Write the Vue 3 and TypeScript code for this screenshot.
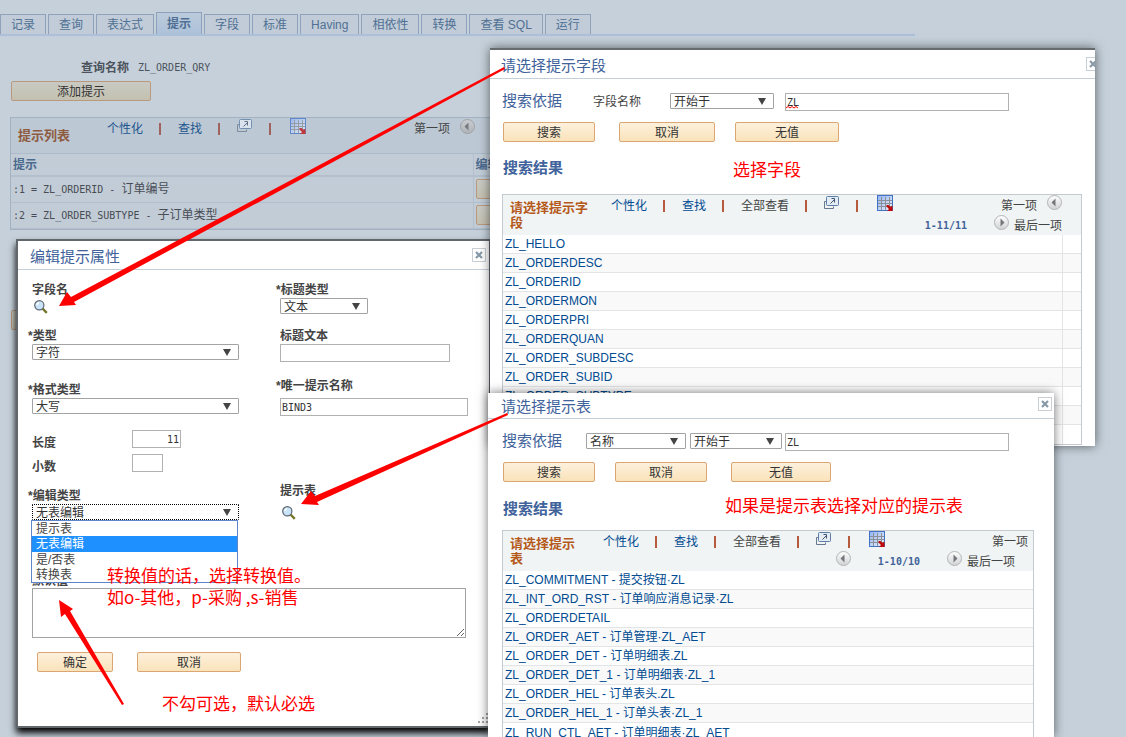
<script setup lang="ts">
import { ref } from 'vue'

interface ResultRow {
  code: string
  label?: string
}

const tabs: string[] = ['记录', '查询', '表达式', '提示', '字段', '标准', 'Having', '相依性', '转换', '查看 SQL', '运行']
const activeTab = ref('提示')

const prompts = [
  { code: ':1 = ZL_ORDERID - ', name: '订单编号' },
  { code: ':2 = ZL_ORDER_SUBTYPE - ', name: '子订单类型' },
]

const fields: ResultRow[] = [
  { code: 'ZL_HELLO' },
  { code: 'ZL_ORDERDESC' },
  { code: 'ZL_ORDERID' },
  { code: 'ZL_ORDERMON' },
  { code: 'ZL_ORDERPRI' },
  { code: 'ZL_ORDERQUAN' },
  { code: 'ZL_ORDER_SUBDESC' },
  { code: 'ZL_ORDER_SUBID' },
  { code: 'ZL_ORDER_SUBTYPE' },
  { code: '' },
  { code: '' },
]

const records: ResultRow[] = [
  { code: 'ZL_COMMITMENT', label: '提交按钮·ZL' },
  { code: 'ZL_INT_ORD_RST', label: '订单响应消息记录·ZL' },
  { code: 'ZL_ORDERDETAIL' },
  { code: 'ZL_ORDER_AET', label: '订单管理·ZL_AET' },
  { code: 'ZL_ORDER_DET', label: '订单明细表.ZL' },
  { code: 'ZL_ORDER_DET_1', label: '订单明细表·ZL_1' },
  { code: 'ZL_ORDER_HEL', label: '订单表头.ZL' },
  { code: 'ZL_ORDER_HEL_1', label: '订单头表·ZL_1' },
  { code: 'ZL_RUN_CTL_AET', label: '订单明细表·ZL_AET' },
]

const editTypes: string[] = ['提示表', '无表编辑', '是/否表', '转换表']
const editType = ref('无表编辑')
const fieldQuery = ref('ZL')
const recordQuery = ref('ZL')
const uniqueName = ref('BIND3')
const length = ref('11')
const decimals = ref('')
const titleText = ref('')
const defaultValue = ref('')
</script>

<template>
  <main class="desktop">
    <svg class="defs" aria-hidden="true">
      <defs>
        <linearGradient id="disc" x1="0" y1="0" x2="0" y2="1">
          <stop offset="0" stop-color="#ffffff" />
          <stop offset="1" stop-color="#cfd2d4" />
        </linearGradient>
        <linearGradient id="sheet" x1="0" y1="0" x2="1" y2="1">
          <stop offset="0" stop-color="#8fb3f5" />
          <stop offset="1" stop-color="#eef3fb" />
        </linearGradient>
        <symbol id="popout" viewBox="0 0 16 14">
          <path d="M3 5.500H.500V12.500H9.500V10.500" fill="none" stroke="#68788c" />
          <rect x="2.500" y=".500" width="12" height="9" rx="1" fill="#e4edf6" stroke="#5b7da6" />
          <path d="M6.500 7.500L10.500 3.500M7.500 2.500H10.500V6.500" fill="none" stroke="#3f526b" />
        </symbol>
        <symbol id="sheet-icon" viewBox="0 0 16 16">
          <rect x=".500" y=".500" width="15" height="15" fill="url(#sheet)" stroke="#4272c4" />
          <path d="M4.500 2V15M8.500 2V15M12.500 2V15M1 5.500H15M1 8.500H15M1 11.500H15" stroke="#8b8f96" fill="none" />
          <path d="M9.500 10L11.500 10L13.500 12L15.500 10.500V16H10L12 14L9.500 11.500Z" fill="#c00a0a" />
        </symbol>
        <symbol id="prev" viewBox="0 0 15 15">
          <circle cx="7.500" cy="7.500" r="7" fill="url(#disc)" stroke="#b3b5b7" />
          <path d="M8.500 3.500V11.500L4.500 7.500Z" fill="#74777a" />
        </symbol>
        <symbol id="next" viewBox="0 0 15 15">
          <circle cx="7.500" cy="7.500" r="7" fill="url(#disc)" stroke="#b3b5b7" />
          <path d="M6.500 3.500V11.500L10.500 7.500Z" fill="#74777a" />
        </symbol>
        <symbol id="lens" viewBox="0 0 14 14">
          <path d="M8.500 8.500L12.800 12.800" stroke="#75762a" stroke-width="2.400" />
          <circle cx="5.300" cy="5.300" r="4.600" fill="#c9e4fa" stroke="#5d6672" stroke-width="1.200" />
          <path d="M2.700 5A3 3 0 0 1 5 2.700" stroke="#fff" stroke-width="1.500" fill="none" />
        </symbol>
        <symbol id="cross" viewBox="0 0 8 8">
          <path d="M1 1L7 7M7 1L1 7" stroke="#8799a6" stroke-width="2.200" />
        </symbol>
      </defs>
    </svg>

    <section class="page">
      <nav class="tabs">
        <a v-for="t in tabs" :key="t" href="#" class="tab" :class="{ active: t === activeTab }" @click.prevent="activeTab = t">{{ t }}</a>
      </nav>
      <p class="query"><b>查询名称</b><span class="mono">ZL_ORDER_QRY</span></p>
      <button type="button" class="btn dim add">添加提示</button>

      <div class="base-grid">
        <div class="grid-head base-head">
          <h2 class="grid-title">提示列表</h2>
          <div class="tools">
            <a href="#">个性化</a><i class="bar"></i><a href="#">查找</a><i class="bar"></i>
            <svg class="popout"><use href="#popout" /></svg><i class="bar"></i>
            <svg class="sheet"><use href="#sheet-icon" /></svg>
          </div>
          <div class="base-pager"><span>第一项</span><svg class="disc"><use href="#prev" /></svg></div>
        </div>
        <table class="prompt-table">
          <thead>
            <tr><th class="wide">提示</th><th>编辑</th></tr>
          </thead>
          <tbody>
            <tr v-for="p in prompts" :key="p.code">
              <td><span class="mono">{{ p.code }}</span>{{ p.name }}</td>
              <td><button type="button" class="btn dim row-btn"></button></td>
            </tr>
          </tbody>
        </table>
      </div>
      <button type="button" class="btn dim under"></button>
    </section>

    <section class="dialog edit-dialog">
      <header class="dialog-head">
        <h1>编辑提示属性</h1>
        <button type="button" class="close"><svg><use href="#cross" /></svg></button>
      </header>
      <div class="edit-body">
        <div class="columns">
          <div class="col">
            <div class="field">
              <span class="lab">字段名</span>
              <button type="button" class="lookup"><svg><use href="#lens" /></svg></button>
            </div>
            <div class="field second">
              <label class="lab req" for="type">*类型</label>
              <span class="pick full"><select id="type"><option>字符</option></select></span>
            </div>
            <div class="field third">
              <label class="lab req" for="format">*格式类型</label>
              <span class="pick full"><select id="format"><option>大写</option></select></span>
            </div>
            <div class="sizes">
              <label for="len">长度</label><input id="len" v-model="length" class="mono num" />
              <label for="dec">小数</label><input id="dec" v-model="decimals" class="mono num short" />
            </div>
            <div class="field edit-type">
              <label class="lab req" for="edit">*编辑类型</label>
              <span class="pick full open">
                <select id="edit" v-model="editType"><option v-for="o in editTypes" :key="o">{{ o }}</option></select>
              </span>
              <ul class="menu" role="listbox">
                <li v-for="o in editTypes" :key="o" role="option" :aria-selected="o === editType" :class="{ on: o === editType }" @click="editType = o">{{ o }}</li>
              </ul>
            </div>
          </div>
          <div class="col">
            <div class="field">
              <label class="lab req" for="ttype">*标题类型</label>
              <span class="pick small"><select id="ttype"><option>文本</option></select></span>
            </div>
            <div class="field title-text">
              <label class="lab" for="ttext">标题文本</label>
              <input id="ttext" v-model="titleText" class="mono medium" />
            </div>
            <div class="field unique">
              <label class="lab req" for="uniq">*唯一提示名称</label>
              <input id="uniq" v-model="uniqueName" class="mono" />
            </div>
            <div class="field prompt-record">
              <span class="lab">提示表</span>
              <button type="button" class="lookup"><svg><use href="#lens" /></svg></button>
            </div>
          </div>
        </div>
        <label class="default-label" for="def">默认值</label>
        <textarea id="def" v-model="defaultValue"></textarea>
        <div class="edit-actions">
          <button type="button" class="btn ok">确定</button>
          <button type="button" class="btn b104">取消</button>
        </div>
      </div>
      <svg class="grip" viewBox="0 0 10 10" aria-hidden="true">
        <path d="M8 0h2v2h-2zM4 4h2v2h-2zM8 4h2v2h-2zM0 8h2v2h-2zM4 8h2v2h-2zM8 8h2v2h-2z" fill="#a5a5a5" />
      </svg>
    </section>

    <section class="dialog field-dialog">
      <header class="dialog-head">
        <h1>请选择提示字段</h1>
        <button type="button" class="close"><svg><use href="#cross" /></svg></button>
      </header>
      <div class="search-body">
        <div class="search-row">
          <span class="by">搜索依据</span>
          <label class="by-name" for="q1">字段名称</label>
          <span class="pick op1"><select aria-label="字段名称"><option>开始于</option></select></span>
          <span class="typed"><input id="q1" v-model="fieldQuery" class="mono" spellcheck="false" /><svg class="squiggle" viewBox="0 0 14 3"><path d="M0 2L2 .500L4 2L6 .500L8 2L10 .500L12 2" fill="none" stroke="#f00" /></svg></span>
        </div>
        <div class="actions first">
          <button type="button" class="btn b92">搜索</button>
          <button type="button" class="btn b96">取消</button>
          <button type="button" class="btn b104">无值</button>
        </div>
        <h2 class="results">搜索结果</h2>
        <div class="result-grid">
          <div class="grid-head">
            <h2 class="grid-title t84">请选择提示字段</h2>
            <div class="tools">
              <a href="#">个性化</a><i class="bar"></i><a href="#">查找</a><i class="bar"></i><span>全部查看</span><i class="bar"></i>
              <svg class="popout"><use href="#popout" /></svg><i class="bar"></i>
              <svg class="sheet"><use href="#sheet-icon" /></svg>
            </div>
            <div class="pager p1">
              <div><span>第一项</span><svg class="disc"><use href="#prev" /></svg></div>
              <div><b>1-11/11</b><svg class="disc"><use href="#next" /></svg><span>最后一项</span></div>
            </div>
          </div>
          <table class="results-table">
            <tbody>
              <tr v-for="(r, i) in fields" :key="i">
                <td><a href="#">{{ r.code }}</a></td>
                <td class="edge"></td>
              </tr>
            </tbody>
          </table>
        </div>
      </div>
    </section>

    <section class="dialog record-dialog">
      <header class="dialog-head">
        <h1>请选择提示表</h1>
        <button type="button" class="close"><svg><use href="#cross" /></svg></button>
      </header>
      <div class="search-body">
        <div class="search-row">
          <span class="by">搜索依据</span>
          <span class="pick key"><select aria-label="搜索依据"><option>名称</option></select></span>
          <span class="pick op2"><select aria-label="条件"><option>开始于</option></select></span>
          <span class="typed near"><input v-model="recordQuery" class="mono" aria-label="值" spellcheck="false" /></span>
        </div>
        <div class="actions">
          <button type="button" class="btn b92">搜索</button>
          <button type="button" class="btn b92">取消</button>
          <button type="button" class="btn b100">无值</button>
        </div>
        <h2 class="results">搜索结果</h2>
        <div class="result-grid">
          <div class="grid-head">
            <h2 class="grid-title t76">请选择提示表</h2>
            <div class="tools">
              <a href="#">个性化</a><i class="bar"></i><a href="#">查找</a><i class="bar"></i><span>全部查看</span><i class="bar"></i>
              <svg class="popout"><use href="#popout" /></svg><i class="bar"></i>
              <svg class="sheet"><use href="#sheet-icon" /></svg>
            </div>
            <div class="pager p2">
              <div><span>第一项</span></div>
              <div><svg class="disc"><use href="#prev" /></svg><b>1-10/10</b><svg class="disc"><use href="#next" /></svg><span>最后一项</span></div>
            </div>
          </div>
          <table class="results-table">
            <tbody>
              <tr v-for="r in records" :key="r.code">
                <td><a href="#">{{ r.code }}<template v-if="r.label"> - {{ r.label }}</template></a></td>
              </tr>
            </tbody>
          </table>
        </div>
      </div>
    </section>

    <svg class="arrows" width="1126" height="737" viewBox="0 0 1126 737" aria-hidden="true">
      <g fill="#f00">
        <path d="M59 306L67 292L71 297L504 67L505 69L74 302L76 305Z" />
        <path d="M301 504L311 491L315 496L507 413L508 415L317 502L319 505Z" />
        <path d="M59 600L73 609L70 611L124 704L122 705L65 614L61 617Z" />
      </g>
    </svg>
    <p class="note n1">选择字段</p>
    <p class="note n2">如果是提示表选择对应的提示表</p>
    <p class="note n3">转换值的话，选择转换值。<br />如o-其他，p-采购 ,s-销售</p>
    <p class="note n4">不勾可选，默认必选</p>
  </main>
</template>

<style>
body {
  background: #c5d0da;
}
</style>

<style scoped>
* {
  box-sizing: border-box;
}
.desktop {
  position: relative;
  height: 100vh;
  overflow: hidden;
  background: #c5d0da;
  color: #444;
  font: 12px/16px 'Liberation Sans', 'Noto Sans CJK SC', sans-serif;
}
.defs {
  position: absolute;
  width: 0;
  height: 0;
}
h1, h2, p, ul {
  margin: 0;
  padding: 0;
}
svg {
  display: block;
  flex: none;
}
a {
  color: #004b91;
  text-decoration: none;
}
button, input, select, textarea {
  font: inherit;
  color: #333;
  margin: 0;
  border-radius: 0;
}
.mono, input.mono {
  font-family: 'DejaVu Sans Mono', 'Noto Sans CJK SC', monospace;
  font-size: 10px;
  white-space: pre;
}
.btn {
  height: 20px;
  padding: 2px 0 0;
  border: 1px solid #dba671;
  border-radius: 2px;
  background: linear-gradient(#fdf0dc, #fae3ba);
  line-height: 16px;
  text-align: center;
}
.btn.dim {
  border-color: #b99a7e;
  background: linear-gradient(#c9cac4, #c4c1b0);
}
.b92 { width: 92px; }
.b96 { width: 96px; }
.b100 { width: 100px; }
.b104 { width: 104px; }

/* Page behind the dialogs */
.page {
  width: 915px;
  padding-top: 12px;
}
.tabs {
  display: flex;
  align-items: flex-end;
  gap: 2px;
  height: 24px;
  border-bottom: 2px solid #acc1d9;
}
.tab {
  height: 20px;
  padding: 0 10px;
  border: 1px solid #8ea2bc;
  border-bottom: 0;
  background: #c1ccd8;
  color: #4f7094;
  line-height: 20px;
}
.tab.active {
  height: 22px;
  background: linear-gradient(#bccbdc, #acc1d9);
  font-weight: bold;
  line-height: 23px;
}
.query {
  display: flex;
  gap: 9px;
  margin: 24px 0 0 81px;
  color: #4c535c;
  line-height: 16px;
}
.add {
  display: block;
  width: 140px;
  margin: 5px 0 0 11px;
}
.base-grid {
  margin: 16px 0 0 10px;
  border: 1px solid #a3b2c2;
  background: #c2ccd6;
}
.grid-head {
  display: flex;
  height: 40px;
  background: #f0f4f5;
  white-space: nowrap;
}
.base-head {
  height: 36px;
  background: #bcc8d4;
  border-bottom: 1px solid #adbac9;
}
.grid-title {
  flex: none;
  margin: 5px 17px 0 7px;
  color: #b5591b;
  font-size: 13px;
  line-height: 15px;
  white-space: normal;
}
.t84 { width: 84px; }
.t76 { width: 76px; }
.base-head .grid-title {
  width: 72px;
  margin-top: 10px;
  color: #8f5b40;
}
.base-head a {
  color: #1c568f;
}
.tools {
  display: flex;
  flex: none;
  height: 22px;
  align-items: center;
}
.bar {
  width: 2px;
  height: 12px;
  margin: 0 17px 0 16px;
  background: #b55a3c;
}
.base-head .bar {
  background: #a0625c;
}
.popout {
  width: 16px;
  height: 14px;
  margin-bottom: 6px;
}
.sheet {
  width: 16px;
  height: 16px;
  margin: 0 0 6px 2px;
}
.base-head svg {
  opacity: 0.75;
}
.disc {
  width: 15px;
  height: 15px;
}
.base-head .disc {
  filter: brightness(0.82);
}
.base-pager {
  display: flex;
  align-items: center;
  gap: 10px;
  height: 22px;
  margin-left: 108px;
}
.base-pager svg {
  margin-bottom: 6px;
}
.prompt-table {
  width: 100%;
  border-collapse: collapse;
  color: #484d55;
}
.prompt-table th, .prompt-table td {
  height: 26px;
  padding: 0 2px;
  border-bottom: 1px solid #b3bfcc;
  border-left: 1px solid #b3bfcc;
  text-align: left;
}
.prompt-table th:first-child, .prompt-table td:first-child {
  border-left: 0;
}
.prompt-table th {
  height: 22px;
  border-bottom: 2px solid #b3bfcc;
  color: #4a6a8e;
}
.wide {
  width: 462px;
}
.row-btn {
  display: block;
  width: 60px;
}
.under {
  display: block;
  width: 60px;
  margin: 80px 0 0 11px;
}

/* Dialog windows */
.dialog {
  position: absolute;
  background: #fff;
  box-shadow: 0 0 10px rgba(0, 0, 0, 0.55);
}
.dialog-head {
  display: flex;
  align-items: center;
  justify-content: space-between;
  height: 29px;
  padding: 4px 3px 0 12px;
  border-bottom: 1px solid #c5cfd7;
}
.dialog-head h1 {
  color: #41629a;
  font-size: 15px;
  font-weight: normal;
  line-height: 20px;
}
.close {
  display: grid;
  place-items: center;
  flex: none;
  width: 14px;
  height: 14px;
  padding: 0;
  border: 1px solid #c9cfd4;
  background: #fff;
}
.close svg {
  width: 8px;
  height: 8px;
}
.edit-dialog {
  left: 18px;
  top: 241px;
  width: 471px;
  box-shadow: 0 0 0 2px #62676c, 0 5px 7px 2px #000;
}
.edit-dialog .close {
  margin-bottom: 4px;
}
.edit-body {
  padding: 11px 22px 54px 14px;
}
.columns {
  display: grid;
  grid-template-columns: 248px 1fr;
}
.col {
  display: flex;
  flex-direction: column;
}
.field {
  display: flex;
  flex-direction: column;
  align-items: flex-start;
  position: relative;
}
.lab, .default-label, .sizes label {
  color: #444;
  font-weight: bold;
  line-height: 18px;
}
.lab {
  height: 17px;
}
.req {
  margin-left: -4px;
}
.second { margin-top: 11px; }
.third { margin-top: 21px; }
.title-text { margin-top: 13px; }
.unique { margin-top: 15px; gap: 4px; }
.prompt-record { margin-top: 66px; gap: 5px; }
.edit-type { margin-top: 15px; }
.lookup {
  width: 18px;
  height: 18px;
  padding: 2px;
  border: 0;
  background: none;
}
.lookup svg {
  width: 14px;
  height: 14px;
}
input {
  height: 18px;
  padding: 0 1px;
  border: 1px solid #b1b1b1;
  background: #fff;
}
.unique input { width: 188px; }
.medium { width: 170px; }
.pick {
  position: relative;
  display: block;
  height: 16px;
}
.pick select {
  display: block;
  width: 100%;
  height: 16px;
  padding: 1px 3px 0;
  appearance: none;
  border: 1px solid #a3a3a3;
  border-radius: 1px;
  background: #fff;
  line-height: 14px;
}
.pick::after {
  content: '';
  position: absolute;
  right: 8px;
  top: 5px;
  border: 4px solid transparent;
  border-top: 7px solid #444;
  border-bottom: 0;
}
.pick.open select {
  border: 1px dotted #000;
}
.full { width: 207px; }
.small { width: 88px; }
.sizes {
  display: grid;
  grid-template-columns: 100px 1fr;
  grid-auto-rows: 18px;
  gap: 6px 0;
  margin-top: 16px;
}
.sizes label {
  padding-top: 4px;
}
.num {
  width: 49px;
  text-align: right;
}
.short { width: 31px; }
.menu {
  position: absolute;
  left: -1px;
  top: 33px;
  width: 207px;
  border: 1px solid #5f86cc;
  background: #fff;
  list-style: none;
}
.menu li {
  height: 15px;
  padding-left: 4px;
  line-height: 16px;
}
.menu li.on {
  height: 16px;
  background: #1e90ff;
  color: #fff;
}
.default-label {
  display: block;
  margin-top: 52px;
  line-height: 14px;
}
textarea {
  display: block;
  width: 100%;
  max-width: 434px;
  height: 50px;
  border: 1px solid #a3a3a3;
  background: #fff;
}
.edit-actions {
  display: flex;
  gap: 24px;
  padding: 14px 0 0 5px;
}
.ok { width: 76px; }
.grip {
  position: absolute;
  right: 1px;
  bottom: 3px;
  width: 10px;
  height: 10px;
}

.field-dialog {
  left: 490px;
  top: 48px;
  width: 605px;
  padding-bottom: 1px;
  border-top: 2px solid #666c6e;
  overflow: hidden;
}
.field-dialog .dialog-head {
  padding-left: 11px;
}
.field-dialog .close {
  margin: 0 -8px 4px 0;
}
.record-dialog {
  left: 488px;
  top: 393px;
  bottom: 0;
  width: 566px;
  overflow: hidden;
}
.record-dialog .dialog-head {
  height: 26px;
  padding: 2px 2px 0 13px;
}
.record-dialog .close {
  margin-bottom: 5px;
}
.search-body {
  padding: 14px 13px 0 12px;
}
.record-dialog .search-body {
  padding: 14px 20px 0 14px;
}
.search-row {
  display: flex;
  height: 18px;
}
.by {
  width: 91px;
  color: #41629a;
  font-size: 15px;
  line-height: 16px;
}
.record-dialog .by {
  width: 84px;
}
.by-name {
  width: 77px;
  line-height: 18px;
}
.op1 { width: 104px; }
.key { width: 100px; margin-right: 4px; }
.op2 { width: 92px; }
.typed {
  position: relative;
  width: 224px;
  margin-left: 11px;
}
.typed.near {
  margin-left: 3px;
}
.typed input {
  display: block;
  width: 100%;
}
.squiggle {
  position: absolute;
  left: 1px;
  top: 13px;
  width: 14px;
  height: 3px;
}
.actions {
  display: flex;
  align-items: flex-start;
  gap: 24px;
  margin: 11px 0 18px 1px;
}
.actions.first .b104 { margin-left: -4px; }
.record-dialog .actions {
  gap: 20px;
  margin-bottom: 19px;
}
.record-dialog .b100 {
  margin-left: 4px;
}
.results {
  margin: 0 0 18px 1px;
  color: #41629a;
  font-size: 15px;
  line-height: 16px;
}
.record-dialog .results {
  margin-bottom: 13px;
}
.result-grid {
  border: 1px solid #c5cacf;
}
.pager {
  display: flex;
  flex: 1;
  flex-direction: column;
  align-items: flex-end;
  min-width: 0;
}
.pager div {
  display: flex;
  align-items: center;
  height: 20px;
}
.pager svg {
  margin-bottom: 6px;
}
.pager span {
  padding-top: 2px;
}
.pager b {
  padding-top: 2px;
  color: #41629a;
  font: bold 10px/16px 'DejaVu Sans Mono', monospace;
}
.p1 { padding-right: 19px; }
.p1 div:first-child { gap: 10px; }
.p1 div:last-child { gap: 5px; }
.p1 b { margin-right: 22px; }
.p2 { padding-right: 5px; }
.p2 div:last-child { padding-right: 13px; gap: 5px; }
.p2 b { margin: 0 22px; }
.results-table {
  width: 100%;
  border-collapse: separate;
  border-spacing: 0;
}
.results-table td {
  height: 19px;
  padding: 0 2px;
  border-bottom: 1px solid #e2e4e6;
  line-height: 18px;
}
.results-table tr:nth-child(even) {
  background: #f9f9f9;
}
.results-table tr:last-child td {
  border-bottom: 0;
}
.results-table .edge {
  width: 19px;
  border-left: 1px solid #e2e4e6;
}

/* Red annotations */
.arrows {
  position: absolute;
  left: 0;
  top: 0;
  pointer-events: none;
}
.note {
  position: absolute;
  color: #f00;
  font: 17px/22px 'Noto Sans CJK SC', sans-serif;
  white-space: nowrap;
}
.n1 { left: 733px; top: 158px; }
.n2 { left: 725px; top: 494px; }
.n3 { left: 107px; top: 564px; }
.n4 { left: 162px; top: 692px; }
</style>
